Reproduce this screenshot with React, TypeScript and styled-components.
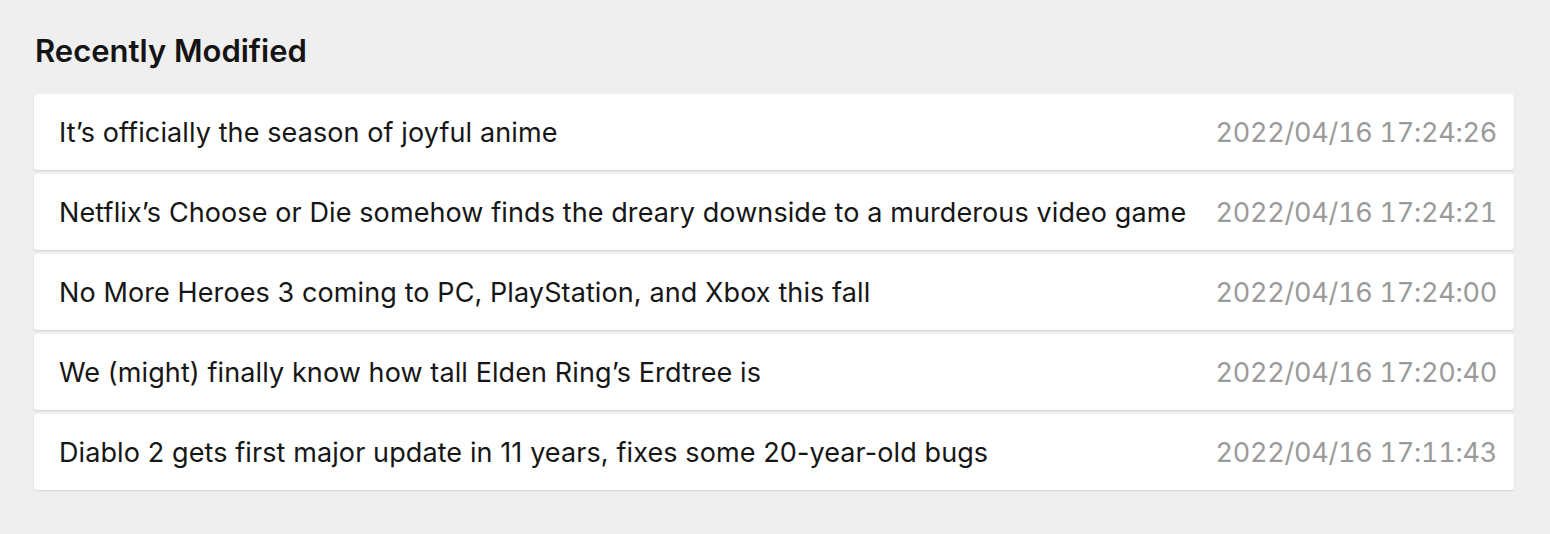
import React from 'react'
import styled, { createGlobalStyle } from 'styled-components'

const GlobalStyle = createGlobalStyle`
  html, body {
    margin: 0;
    padding: 0;
    background: #efefef;
    font-family: Inter, "Noto Sans", sans-serif;
  }
`

const Page = styled.div`
  padding: 31px 36px 40px 34px;
`

const Title = styled.h2`
  margin: 0 0 23px 1px;
  font-size: 31px;
  line-height: 40px;
  font-weight: 600;
  color: #141414;
`

const List = styled.div`
  display: flex;
  flex-direction: column;
  gap: 4px;
`

const Item = styled.div`
  display: flex;
  align-items: center;
  justify-content: space-between;
  height: 76px;
  padding: 0 17px 0 25px;
  box-sizing: border-box;
  background: #fff;
  border-radius: 3px;
  box-shadow: 0 1px 2px rgba(0, 0, 0, 0.12);
`

const Name = styled.span`
  font-size: 27px;
  color: #161616;
  white-space: nowrap;
  letter-spacing: 0.1px;
`

const Time = styled.span`
  flex-shrink: 0;
  font-size: 27px;
  color: #9a9a9a;
  white-space: nowrap;
  margin-left: 16px;
  letter-spacing: -0.25px;
  font-variant-numeric: tabular-nums;
`

const items = [
  { title: 'It’s officially the season of joyful anime', time: '2022/04/16 17:24:26' },
  { title: 'Netflix’s Choose or Die somehow finds the dreary downside to a murderous video game', time: '2022/04/16 17:24:21' },
  { title: 'No More Heroes 3 coming to PC, PlayStation, and Xbox this fall', time: '2022/04/16 17:24:00' },
  { title: 'We (might) finally know how tall Elden Ring’s Erdtree is', time: '2022/04/16 17:20:40' },
  { title: 'Diablo 2 gets first major update in 11 years, fixes some 20-year-old bugs', time: '2022/04/16 17:11:43' },
]

const App = () => {
  return (
    <Page>
      <GlobalStyle />
      <Title>Recently Modified</Title>
      <List>
        {items.map((item) => (
          <Item key={item.time}>
            <Name>{item.title}</Name>
            <Time>{item.time}</Time>
          </Item>
        ))}
      </List>
    </Page>
  )
}

export default App
